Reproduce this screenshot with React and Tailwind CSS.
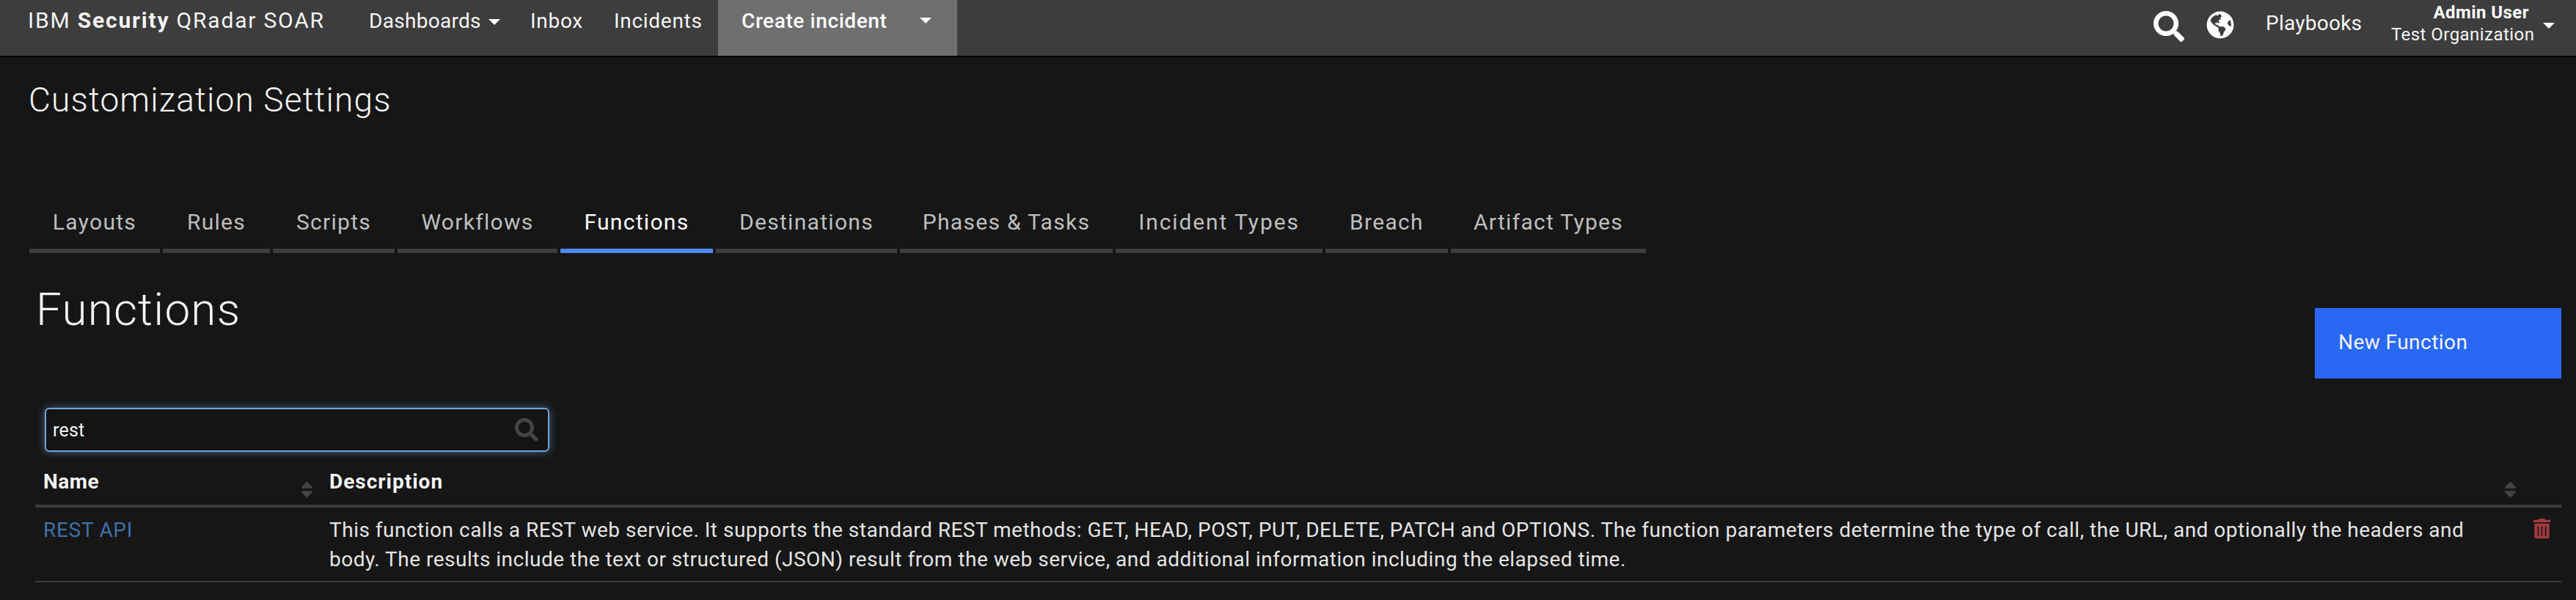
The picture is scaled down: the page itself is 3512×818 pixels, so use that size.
import React from "react";
import { FaSearch, FaGlobeAmericas, FaTrashAlt, FaSort } from "react-icons/fa";

const tabs = [
  ["Layouts", "w-[178px] tracking-[1.3px]"],
  ["Rules", "w-[146px] tracking-[1.3px]"],
  ["Scripts", "w-[166px] tracking-[1.3px]"],
  ["Workflows", "w-[218px] tracking-[1.3px]"],
  ["Functions", "w-[208px] tracking-[1.3px]", true],
  ["Destinations", "w-[247px] tracking-[1.3px]"],
  ["Phases & Tasks", "w-[290px] tracking-[1.3px]"],
  ["Incident Types", "w-[282px] tracking-[1.9px]"],
  ["Breach", "w-[167px] tracking-[1.3px]"],
  ["Artifact Types", "w-[266px] tracking-[1.3px]"],
];

function Caret() {
  return <span className="block w-0 h-0 border-l-[8px] border-r-[8px] border-t-[8px] border-l-transparent border-r-transparent border-t-white" />;
}

export default function App() {
  return (
    <div className="min-h-[818px] bg-[#161616] text-white font-['Roboto',sans-serif]">
      <header className="flex h-[78px] border-b-2 border-black bg-[#3d3d3d] text-[28px] leading-[36px]">
        <div className="ml-[38px] w-[465px] pt-[10px] text-[30px] tracking-[1.8px] text-[#f4f4f4] whitespace-nowrap">
          IBM <span className="font-bold">Security</span> QRadar SOAR
        </div>
        <div className="flex items-start pt-[11px] w-[220px] text-[#f4f4f4] tracking-[0.3px]">
          Dashboards
          <span className="ml-[10px] mt-[15px]"><Caret /></span>
        </div>
        <div className="pt-[11px] w-[114px] text-[#f4f4f4] tracking-[0.7px]">Inbox</div>
        <div className="pt-[11px] w-[142px] text-[#f4f4f4] tracking-[0.7px]">Incidents</div>
        <div className="flex items-start w-[326px] bg-[#6f6f6f] pl-[32px] pt-[11px] font-medium tracking-[0.6px]">
          Create incident
          <span className="ml-[45px] mt-[13px]"><Caret /></span>
        </div>
        <div className="ml-auto flex items-start">
          <FaSearch className="mt-[15px] text-[42px]" />
          <FaGlobeAmericas className="mt-[15px] ml-[30px] text-[38px]" />
          <div className="ml-[43px] pt-[14px] w-[171px] text-[#f4f4f4] tracking-[0.25px]">Playbooks</div>
          <div className="pt-[4px] text-right text-[24px] w-[188px] tracking-[0.45px] whitespace-nowrap">
            <div className="font-bold leading-[26px]">Admin User</div>
            <div className="leading-[34px] text-[#f4f4f4]">Test Organization</div>
          </div>
          <span className="ml-[19px] mr-[29px] mt-[31px]"><Caret /></span>
        </div>
      </header>

      <h1 className="ml-[39px] mt-[32px] text-[46px] leading-[52px] font-light tracking-[1.15px] text-[#f4f4f4]">
        Customization Settings
      </h1>

      <nav className="ml-[40px] mt-[118px] flex gap-[4px] text-[30px]">
        {tabs.map(([label, w, active]) => (
          <div key={label} className={`${w} h-[65px] border-b-[6px] pt-[3px] text-center leading-[40px] ${active ? "border-[#4f87ee] text-white" : "border-[#3d3d3d] text-[#bebebe]"}`}>
            {label}
          </div>
        ))}
      </nav>

      <section className="ml-[48px] mr-[20px]">
        <div className="flex items-start justify-between mt-[45px]">
          <h2 className="ml-[1px] -mt-[4px] text-[62px] leading-[72px] font-light tracking-[1.2px] text-[#f4f4f4]">Functions</h2>
          <button className="mt-[30px] h-[96px] w-[336px] bg-[#2968f5] pl-[32px] pb-[2px] text-left text-[28px] leading-[36px] tracking-[0.45px] text-[#f4f4f4]">New Function</button>
        </div>

        <div className="ml-[13px] mt-[40px] flex h-[60px] w-[688px] items-center rounded-[6px] border-2 border-[#6ea6d9] bg-[#141414] pl-[9px] pr-[13px] shadow-[0_0_12px_rgba(110,166,217,0.55)]">
          <span className="flex-1 pt-[2px] text-[25px] tracking-[0.2px] text-[#f4f4f4]">rest</span>
          <FaSearch className="text-[32px] text-[#444444]" />
        </div>

        <div className="flex h-[76px] border-b-4 border-[#3d3d3d] text-[28px] leading-[36px] font-bold text-[#f4f4f4]">
          <div className="flex w-[401px] items-start justify-between pl-[11px] pr-[17px] pt-[23px] tracking-[0.5px]">
            Name
            <FaSort className="mt-[15px] text-[27px] text-[#444444]" />
          </div>
          <div className="flex flex-1 items-start justify-between pr-[56px] pt-[23px] tracking-[1px]">
            Description
            <FaSort className="mt-[15px] text-[27px] text-[#444444]" />
          </div>
        </div>

        <div className="flex h-[102px] border-b-2 border-[#3d3d3d] text-[28px] leading-[40px] text-[#e4e4e4]">
          <div className="w-[401px] pl-[11px] pt-[11px] text-[#3d71a9] tracking-[0.7px]">REST API</div>
          <div className="w-[2940px] pt-[11px] tracking-[0.5px]">
            This function calls a REST web service. It supports the standard REST methods: GET, HEAD, POST, PUT, DELETE, PATCH and OPTIONS. The function parameters determine the type of call, the URL, and optionally the headers and body. The results include the text or structured (JSON) result from the web service, and additional information including the elapsed time.
          </div>
          <FaTrashAlt className="ml-[63px] mt-[15px] text-[27px] text-[#a33b3e]" />
        </div>
      </section>
    </div>
  );
}
